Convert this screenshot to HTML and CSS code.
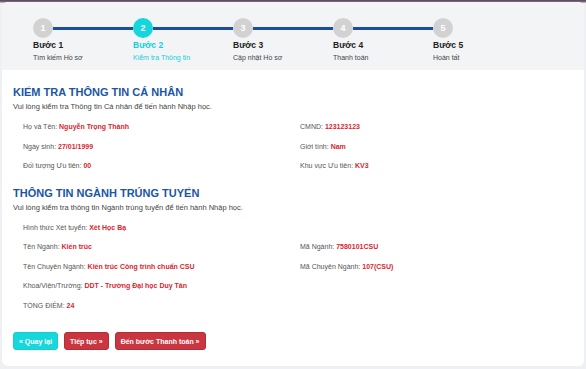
FILE: index.html
```html
<!DOCTYPE html>
<html lang="vi">
<head>
<meta charset="utf-8">
<title>Nhập học</title>
<link rel="stylesheet" href="styles.css">
</head>
<body>
<div class="card">
  <div class="steps">
    <div class="step">
      <div class="track"><span class="dot">1</span><span class="line"></span></div>
      <div class="step-title">Bước 1</div>
      <div class="step-sub">Tìm kiếm Hồ sơ</div>
    </div>
    <div class="step active">
      <div class="track"><span class="dot">2</span><span class="line"></span></div>
      <div class="step-title">Bước 2</div>
      <div class="step-sub">Kiểm tra Thông tin</div>
    </div>
    <div class="step">
      <div class="track"><span class="dot">3</span><span class="line"></span></div>
      <div class="step-title">Bước 3</div>
      <div class="step-sub">Cập nhật Hồ sơ</div>
    </div>
    <div class="step">
      <div class="track"><span class="dot">4</span><span class="line"></span></div>
      <div class="step-title">Bước 4</div>
      <div class="step-sub">Thanh toán</div>
    </div>
    <div class="step last">
      <div class="track"><span class="dot">5</span></div>
      <div class="step-title">Bước 5</div>
      <div class="step-sub">Hoàn tất</div>
    </div>
  </div>

  <div class="content">
    <h2 class="sec-title">KIỂM TRA THÔNG TIN CÁ NHÂN</h2>
    <p class="sec-desc">Vui lòng kiểm tra Thông tin Cá nhân để tiến hành Nhập học.</p>
    <div class="grid">
      <div class="field">Họ và Tên: <b>Nguyễn Trọng Thành</b></div>
      <div class="field">CMND: <b>123123123</b></div>
      <div class="field">Ngày sinh: <b>27/01/1999</b></div>
      <div class="field">Giới tính: <b>Nam</b></div>
      <div class="field">Đối tượng Ưu tiên: <b>00</b></div>
      <div class="field">Khu vực Ưu tiên: <b>KV3</b></div>
    </div>

    <h2 class="sec-title second">THÔNG TIN NGÀNH TRÚNG TUYỂN</h2>
    <p class="sec-desc">Vui lòng kiểm tra thông tin Ngành trúng tuyển để tiến hành Nhập học.</p>
    <div class="grid">
      <div class="field full">Hình thức Xét tuyển: <b>Xét Học Bạ</b></div>
      <div class="field">Tên Ngành: <b>Kiến trúc</b></div>
      <div class="field">Mã Ngành: <b>7580101CSU</b></div>
      <div class="field">Tên Chuyên Ngành: <b>Kiến trúc Công trình chuẩn CSU</b></div>
      <div class="field">Mã Chuyên Ngành: <b>107(CSU)</b></div>
      <div class="field full">Khoa/Viện/Trường: <b>DDT - Trường Đại học Duy Tân</b></div>
      <div class="field full">TỔNG ĐIỂM: <b>24</b></div>
    </div>

    <div class="actions">
      <button class="btn btn-cyan">« Quay lại</button>
      <button class="btn btn-red">Tiếp tục »</button>
      <button class="btn btn-red">Đến bước Thanh toán »</button>
    </div>
  </div>
</div>
</body>
</html>
```
FILE: styles.css
```css
html {
  background: #eef0f3;
}
body {
  margin: 0;
  padding: 2px;
  font-family: "Liberation Sans", Arial, sans-serif;
  background: linear-gradient(to bottom, #4e4560 0px, #8a6f78 2px, #eef0f3 3px, #eef0f3 100%);
  min-height: 369px;
  box-sizing: border-box;
}
.card {
  background: #ffffff;
  border-radius: 6px;
  overflow: hidden;
  height: 364px;
}
.steps {
  background: #f3f4f6;
  display: flex;
  padding: 16px 0 0 31px;
  height: 68px;
  box-sizing: border-box;
}
.step {
  width: 100px;
}
.track {
  display: flex;
  align-items: center;
  height: 20px;
}
.dot {
  width: 20px;
  height: 20px;
  border-radius: 50%;
  background: #d2d2d2;
  color: #ffffff;
  font-size: 9px;
  font-weight: bold;
  display: flex;
  align-items: center;
  justify-content: center;
  flex: none;
}
.line {
  flex: 1;
  height: 3px;
  background: #1b4f9b;
}
.active .dot {
  background: #14d6dc;
}
.step-title {
  margin-top: 2px;
  font-size: 8.5px;
  font-weight: bold;
  color: #222;
  line-height: 11px;
}
.step-sub {
  margin-top: 1px;
  font-size: 7px;
  color: #444;
  line-height: 11px;
}
.active .step-title,
.active .step-sub {
  color: #14d0d8;
}
.content {
  padding: 15px 11px 0 11px;
}
.sec-title {
  margin: 0;
  font-size: 11px;
  font-weight: bold;
  color: #1a56a4;
  line-height: 14px;
}
.sec-title.second {
  margin-top: 10px;
}
.sec-desc {
  margin: 2px 0 0 0;
  font-size: 7.5px;
  color: #444;
  line-height: 12px;
}
.grid {
  display: grid;
  grid-template-columns: 277px 1fr;
  padding: 4px 0 0 10px;
}
.field {
  font-size: 7px;
  color: #555;
  line-height: 19.5px;
}
.field.full {
  grid-column: 1 / span 2;
}
.field b {
  color: #d7262f;
}
.actions {
  display: flex;
  gap: 6px;
  margin-top: 17px;
}
.btn {
  font-family: "Liberation Sans", Arial, sans-serif;
  font-size: 7px;
  font-weight: bold;
  color: #ffffff;
  border: 1px solid transparent;
  border-radius: 3px;
  height: 18px;
  padding: 0 5px;
}
.btn-cyan {
  background: #16d8dc;
  border-color: #12cfd4;
}
.btn-red {
  background: #c9363f;
  border-color: #b52d36;
}
```
